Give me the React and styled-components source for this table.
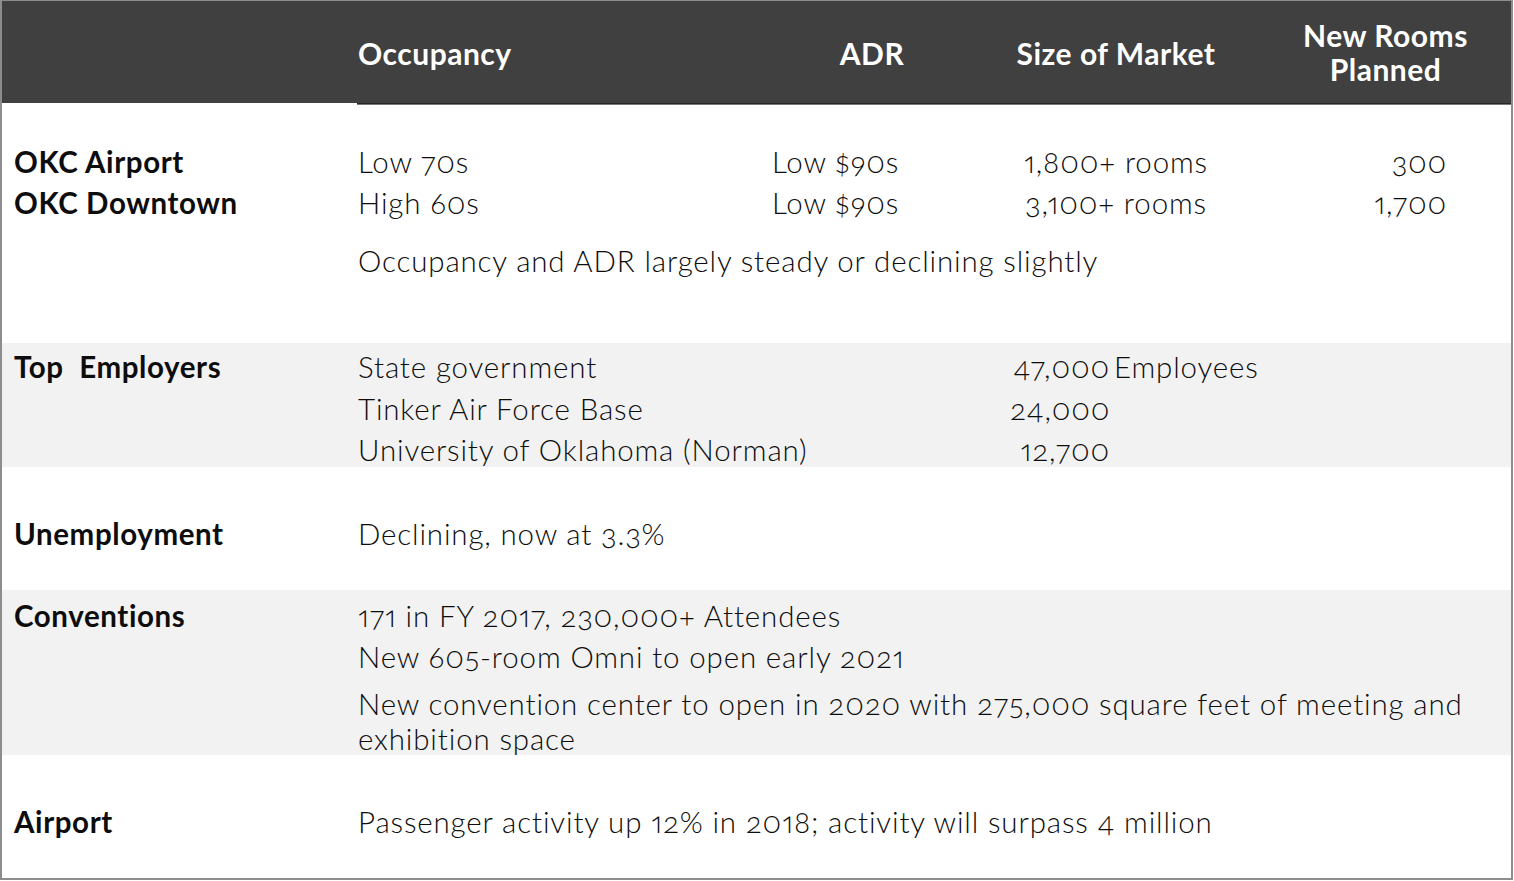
import * as React from "react";
import styled, { createGlobalStyle } from "styled-components";

const GlobalStyle = createGlobalStyle`
  html, body {
    margin: 0;
    padding: 0;
    background: #ffffff;
  }
  body {
    font-family: Lato, "Open Sans", "Liberation Sans", sans-serif;
    font-variant-numeric: oldstyle-nums proportional-nums;
    font-feature-settings: "onum" 1, "pnum" 1;
    color: #0d0d0d;
  }
`;

const COLS = "356px 414px 200px 288px 1fr";
const BODY_SPACING = "0.85px";

const Frame = styled.div`
  width: 1513px;
  height: 880px;
  box-sizing: border-box;
  border: 2px solid #8d8d8d;
  border-top-width: 1px;
  display: flex;
  flex-direction: column;
  overflow: hidden;
`;

const HeaderBar = styled.div`
  display: grid;
  grid-template-columns: ${COLS};
  align-items: center;
  height: 102px;
  background: #404040;
  color: #ffffff;
  font-size: 30px;
  font-weight: 700;
  letter-spacing: 0.5px;
  line-height: 34px;
`;

const HeaderCell = styled.div`
  text-align: ${({ $align }) => $align || "left"};
  padding-top: ${({ $lift }) => ($lift ? "0" : "2px")};
`;

const HeaderRule = styled.div`
  display: flex;
  height: 2px;
`;

const RuleGap = styled.div`
  width: 355px;
`;

const RuleLine = styled.div`
  flex: 1;
  background: #262626;
  border-bottom: 1px solid #7a7a7a;
`;

const Section = styled.div`
  display: flex;
  box-sizing: border-box;
  background: ${({ $shade }) => ($shade ? "#f2f2f2" : "#ffffff")};
  padding: ${({ $pad }) => $pad};
  height: ${({ $h }) => ($h ? `${$h}px` : "auto")};
  flex-shrink: 0;
`;

const Label = styled.div`
  width: 344px;
  padding-left: 12px;
  flex-shrink: 0;
  font-size: 29.5px;
  font-weight: 700;
  letter-spacing: 0.6px;
  line-height: 41px;
`;

const Content = styled.div`
  flex: 1;
  display: flex;
  flex-direction: column;
  font-size: 29.5px;
  font-weight: 300;
  letter-spacing: ${BODY_SPACING};
  line-height: 41px;
`;

const MarketBlock = styled.div`
  flex: 1;
  display: flex;
  flex-direction: column;
`;

const MarketRow = styled.div`
  display: grid;
  grid-template-columns: ${COLS};
  font-size: 29.5px;
  line-height: 41px;
`;

const RowLabel = styled.div`
  padding-left: 12px;
  font-weight: 700;
  letter-spacing: 0.6px;
`;

const RowValue = styled.div`
  font-weight: 300;
  letter-spacing: ${BODY_SPACING};
  text-align: ${({ $align }) => $align || "left"};
  padding-right: ${({ $align }) => ($align === "right" ? "64px" : "0")};
`;

const Note = styled.div`
  padding-left: 356px;
  margin-top: 17px;
  font-size: 29.5px;
  font-weight: 300;
  letter-spacing: ${BODY_SPACING};
  line-height: 41px;
`;

const EmployerRow = styled.div`
  display: grid;
  grid-template-columns: 652px 100px auto;
  line-height: 41.5px;
`;

const Count = styled.span`
  text-align: right;
`;

const Unit = styled.span`
  padding-left: 4px;
`;

const Para = styled.div`
  max-width: 1135px;
  line-height: 35px;
  margin-top: 9px;
`;

const markets = [
  { name: "OKC Airport", occ: "Low 70s", adr: "Low $90s", size: "1,800+ rooms", rooms: "300" },
  { name: "OKC Downtown", occ: "High 60s", adr: "Low $90s", size: "3,100+ rooms", rooms: "1,700" },
];

const employers = [
  { name: "State government", count: "47,000", unit: "Employees" },
  { name: "Tinker Air Force Base", count: "24,000" },
  { name: "University of Oklahoma (Norman)", count: "12,700" },
];

export default function App() {
  return (
    <>
      <GlobalStyle />
      <Frame>
        <HeaderBar>
          <HeaderCell />
          <HeaderCell>Occupancy</HeaderCell>
          <HeaderCell $align="center">ADR</HeaderCell>
          <HeaderCell $align="center">Size of Market</HeaderCell>
          <HeaderCell $align="center" $lift>
            New Rooms
            <br />
            Planned
          </HeaderCell>
        </HeaderBar>
        <HeaderRule>
          <RuleGap />
          <RuleLine />
        </HeaderRule>

        <Section $pad="36px 0 0" $h={238}>
          <MarketBlock>
            {markets.map((m) => (
              <MarketRow key={m.name}>
                <RowLabel>{m.name}</RowLabel>
                <RowValue>{m.occ}</RowValue>
                <RowValue>{m.adr}</RowValue>
                <RowValue $align="center">{m.size}</RowValue>
                <RowValue $align="right">{m.rooms}</RowValue>
              </MarketRow>
            ))}
            <Note>Occupancy and ADR largely steady or declining slightly</Note>
          </MarketBlock>
        </Section>

        <Section $shade $pad="3px 0 0" $h={124}>
          <Label>Top&nbsp; Employers</Label>
          <Content>
            {employers.map((e) => (
              <EmployerRow key={e.name}>
                <span>{e.name}</span>
                <Count>{e.count}</Count>
                <Unit>{e.unit}</Unit>
              </EmployerRow>
            ))}
          </Content>
        </Section>

        <Section $pad="46px 0 0" $h={123}>
          <Label>Unemployment</Label>
          <Content>Declining, now at 3.3%</Content>
        </Section>

        <Section $shade $pad="5px 0 0" $h={165}>
          <Label>Conventions</Label>
          <Content>
            <div>171 in FY 2017, 230,000+ Attendees</div>
            <div>New 605-room Omni to open early 2021</div>
            <Para>
              New convention center to open in 2020 with 275,000 square feet of meeting and exhibition space
            </Para>
          </Content>
        </Section>

        <Section $pad="46px 0 0">
          <Label>Airport</Label>
          <Content>Passenger activity up 12% in 2018; activity will surpass 4 million</Content>
        </Section>
      </Frame>
    </>
  );
}
